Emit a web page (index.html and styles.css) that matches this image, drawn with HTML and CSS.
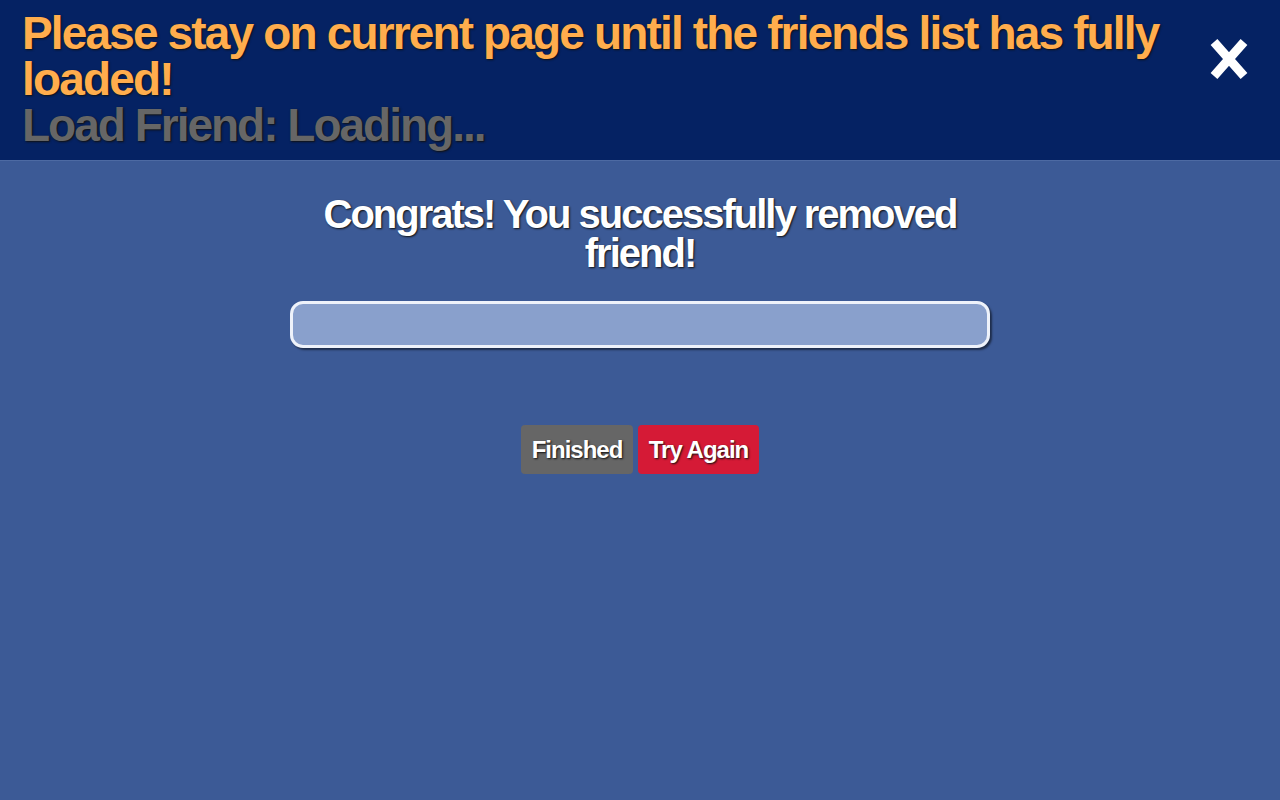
FILE: index.html
```html
<!DOCTYPE html>
<html>
<head>
<meta charset="utf-8">
<link rel="stylesheet" href="styles.css">
</head>
<body>
<header class="topbar">
  <div class="notice">
    <div class="warn">Please stay on current page until the friends list has fully loaded!</div>
    <div class="status">Load Friend: Loading...</div>
  </div>
  <button class="close" aria-label="Close">
    <svg width="38" height="44" viewBox="0 0 38 44"><path d="M4 5 L34 39 M34 5 L4 39" stroke="#fff" stroke-width="9" stroke-linecap="butt"/></svg>
  </button>
</header>
<main class="content">
  <h1 class="title">Congrats! You successfully removed friend!</h1>
  <div class="progress"></div>
  <div class="actions">
    <button class="btn btn-gray">Finished</button>
    <button class="btn btn-red">Try Again</button>
  </div>
</main>
</body>
</html>
```
FILE: styles.css
```css
html, body {
  margin: 0;
  padding: 0;
  height: 100%;
}
body {
  background: #3c5a96;
  font-family: "Liberation Sans", Arial, sans-serif;
  font-weight: bold;
}
.topbar {
  background: #052263;
  height: 161px;
  border-bottom: 1px solid #4d6aa3;
  box-sizing: border-box;
  display: flex;
  align-items: flex-start;
  padding: 10px 22px 0 22px;
}
.notice {
  flex: 1;
}
.warn {
  color: #ffad4d;
  font-size: 46px;
  line-height: 46px;
  letter-spacing: -1.85px;
  text-shadow: 1px 1px 2px #111;
}
.status {
  color: #666666;
  font-size: 46px;
  line-height: 46px;
  letter-spacing: -2px;
  text-shadow: 1px 1px 2px #111;
}
.close {
  background: none;
  border: none;
  padding: 0;
  margin: 27px 10px 0 0;
  cursor: pointer;
  display: block;
}
.close svg {
  display: block;
}
.content {
  display: flex;
  flex-direction: column;
  align-items: center;
}
.title {
  margin: 34px 0 0 0;
  width: 700px;
  text-align: center;
  color: #fff;
  font-size: 40px;
  line-height: 39px;
  letter-spacing: -2px;
  text-shadow: 1px 1px 2px #111;
}
.progress {
  margin-top: 28px;
  width: 700px;
  height: 47px;
  box-sizing: border-box;
  border: 3px solid #eef2fa;
  border-radius: 13px;
  background: #89a0cc;
  box-shadow: 2px 2px 2px rgba(0,0,0,0.5);
}
.actions {
  margin-top: 77px;
  display: flex;
  gap: 5px;
}
.btn {
  border: none;
  height: 49px;
  padding: 0;
  border-radius: 4px;
  color: #fff;
  font-family: inherit;
  font-weight: bold;
  font-size: 24px;
  letter-spacing: -1px;
  white-space: nowrap;
  text-shadow: 1px 1px 2px #111;
}
.btn-gray { background: #666666; width: 112px; }
.btn-red { background: #d51a36; width: 121px; }
```
